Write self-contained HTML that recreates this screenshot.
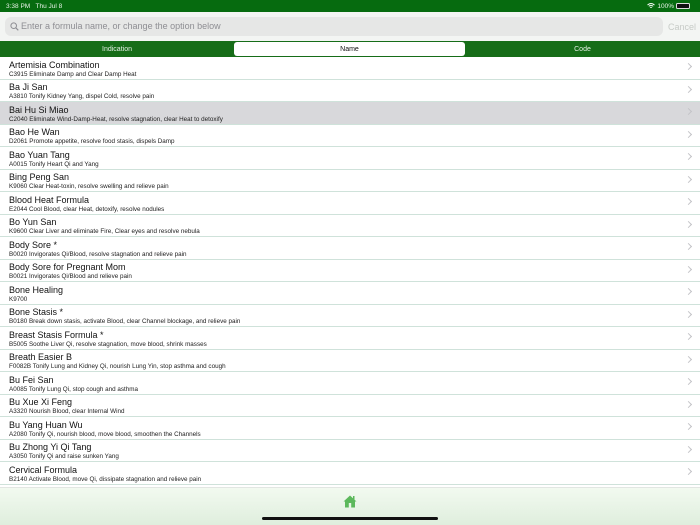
<!DOCTYPE html>
<html><head><meta charset="utf-8"><style>
*{margin:0;padding:0;box-sizing:border-box}
body{width:700px;height:525px;overflow:hidden;background:#fff;font-family:"Liberation Sans",sans-serif;position:relative}
.status{position:absolute;top:0;left:0;width:700px;height:12px;background:#066b0f;color:#e8f2e8;font-size:6.5px}
.status .l{position:absolute;left:6px;top:3px}
.status .r{position:absolute;right:10px;top:2.5px;display:flex;align-items:center;gap:2px}
.search{position:absolute;top:12px;left:0;width:700px;height:29px;background:#f3f5f3}
.field{position:absolute;left:5px;top:5px;width:658px;height:19px;background:#e6e7e6;border-radius:6px;color:#8e8e93;font-size:9px;line-height:19px;padding-left:16px}
.field svg{position:absolute;left:5px;top:5px}
.cancel{position:absolute;left:668px;top:10px;font-size:9px;color:#c7cbc7}
.seg{position:absolute;top:41px;left:0;width:700px;height:16px;background:#166d18;color:#e5f0e5;font-size:7px}
.seg div{position:absolute;top:0;height:16px;line-height:17px;text-align:center}
.seg .sel{left:234px;width:231px;top:1px;height:14px;line-height:15px;background:#fff;color:#111;border-radius:3px}
.list{position:absolute;top:57px;left:0;width:700px}
.row{height:22.5px;position:relative;border-bottom:1px solid #cfe2da}
.row.h{background:#d8d8db}
.t{position:absolute;left:9px;top:2.5px;font-size:9px;color:#111}
.s{position:absolute;left:9px;top:13.5px;font-size:6.3px;color:#222}
.c{position:absolute;right:9px;top:7px;width:5px;height:5px;border-right:1px solid #c4c4c8;border-top:1px solid #c4c4c8;transform:rotate(45deg)}
.tab{position:absolute;top:487px;left:0;width:700px;height:38px;background:linear-gradient(#f2faf0,#dfeedd);border-top:1px solid #e2e6e2}
.bar{position:absolute;left:262px;top:517px;width:176px;height:3px;border-radius:2px;background:#111}
</style></head><body>
<div class="status"><span class="l">3:38 PM &nbsp; Thu Jul 8</span>
<span class="r"><svg width="8" height="6" viewBox="0 0 8 6"><path d="M0.5 2 Q4 -1 7.5 2 M1.8 3.3 Q4 1.3 6.2 3.3 M3 4.5 Q4 3.8 5 4.5" stroke="#fff" fill="none" stroke-width="0.9"/></svg>100% <span style="display:inline-block;width:14px;height:6px;background:#111;border-radius:1.5px;border:0.5px solid #ddd"></span></span></div>
<div class="search"><div class="field"><svg width="9" height="9" viewBox="0 0 9 9"><circle cx="3.7" cy="3.7" r="2.8" stroke="#8e8e93" fill="none" stroke-width="1"/><path d="M5.8 5.8 L8.3 8.3" stroke="#8e8e93" stroke-width="1.1"/></svg>Enter a formula name, or change the option below</div><span class="cancel">Cancel</span></div>
<div class="seg"><div style="left:0;width:234px">Indication</div><div class="sel">Name</div><div style="left:465px;width:235px">Code</div></div>
<div class="list">
<div class="row"><span class="t">Artemisia Combination</span><span class="s">C3915 Eliminate Damp and Clear Damp Heat</span><i class="c"></i></div>
<div class="row"><span class="t">Ba Ji San</span><span class="s">A3810 Tonify Kidney Yang, dispel Cold, resolve pain</span><i class="c"></i></div>
<div class="row h"><span class="t">Bai Hu Si Miao</span><span class="s">C2040 Eliminate Wind-Damp-Heat, resolve stagnation, clear Heat to detoxify</span><i class="c"></i></div>
<div class="row"><span class="t">Bao He Wan</span><span class="s">D2061 Promote appetite, resolve food stasis, dispels Damp</span><i class="c"></i></div>
<div class="row"><span class="t">Bao Yuan Tang</span><span class="s">A0015 Tonify Heart Qi and Yang</span><i class="c"></i></div>
<div class="row"><span class="t">Bing Peng San</span><span class="s">K9060 Clear Heat-toxin, resolve swelling and relieve pain</span><i class="c"></i></div>
<div class="row"><span class="t">Blood Heat Formula</span><span class="s">E2044 Cool Blood, clear Heat, detoxify, resolve nodules</span><i class="c"></i></div>
<div class="row"><span class="t">Bo Yun San</span><span class="s">K9600 Clear Liver and eliminate Fire, Clear eyes and resolve nebula</span><i class="c"></i></div>
<div class="row"><span class="t">Body Sore *</span><span class="s">B0020 Invigorates Qi/Blood, resolve stagnation and relieve pain</span><i class="c"></i></div>
<div class="row"><span class="t">Body Sore for Pregnant Mom</span><span class="s">B0021 Invigorates Qi/Blood and relieve pain</span><i class="c"></i></div>
<div class="row"><span class="t">Bone Healing</span><span class="s">K9700</span><i class="c"></i></div>
<div class="row"><span class="t">Bone Stasis *</span><span class="s">B0180 Break down stasis, activate Blood, clear Channel blockage, and relieve pain</span><i class="c"></i></div>
<div class="row"><span class="t">Breast Stasis Formula *</span><span class="s">B5005 Soothe Liver Qi, resolve stagnation, move blood, shrink masses</span><i class="c"></i></div>
<div class="row"><span class="t">Breath Easier B</span><span class="s">F0082B Tonify Lung and Kidney Qi, nourish Lung Yin, stop asthma and cough</span><i class="c"></i></div>
<div class="row"><span class="t">Bu Fei San</span><span class="s">A0085 Tonify Lung Qi, stop cough and asthma</span><i class="c"></i></div>
<div class="row"><span class="t">Bu Xue Xi Feng</span><span class="s">A3320 Nourish Blood, clear Internal Wind</span><i class="c"></i></div>
<div class="row"><span class="t">Bu Yang Huan Wu</span><span class="s">A2080 Tonify Qi, nourish blood, move blood, smoothen the Channels</span><i class="c"></i></div>
<div class="row"><span class="t">Bu Zhong Yi Qi Tang</span><span class="s">A3050 Tonify Qi and raise sunken Yang</span><i class="c"></i></div>
<div class="row"><span class="t">Cervical Formula</span><span class="s">B2140 Activate Blood, move Qi, dissipate stagnation and relieve pain</span><i class="c"></i></div>
</div>
<div class="tab"><svg style="position:absolute;left:343px;top:7px" width="14" height="13" viewBox="0 0 14 13"><path d="M7 0.5 L13.5 6.5 L12 6.5 L12 12.5 L2 12.5 L2 6.5 L0.5 6.5 Z" fill="#5cb85c"/><rect x="10" y="1" width="1.5" height="4" fill="#5cb85c"/><rect x="5.8" y="8" width="2.4" height="4.5" fill="#e8f5e6"/></svg></div>
<div class="bar"></div>
</body></html>
